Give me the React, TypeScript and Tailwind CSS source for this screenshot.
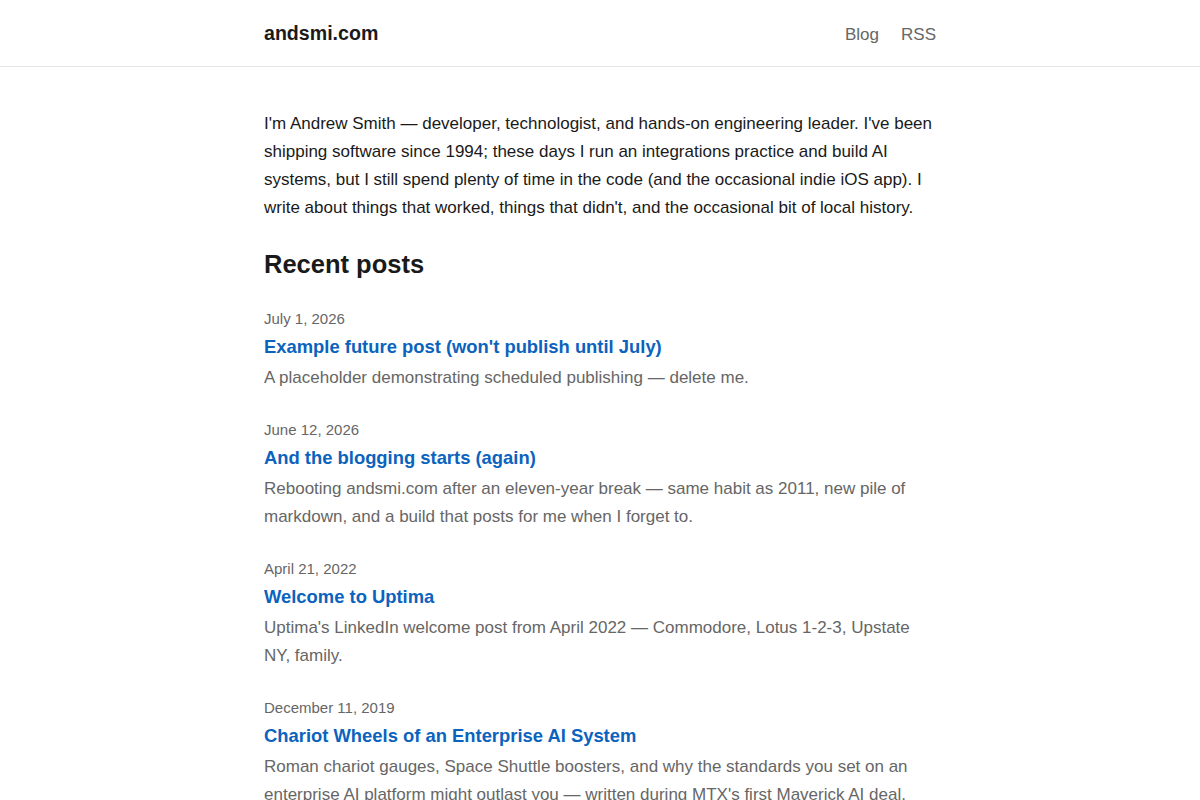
const posts = [
  {
    date: "July 1, 2026",
    title: "Example future post (won't publish until July)",
    summary: "A placeholder demonstrating scheduled publishing — delete me.",
  },
  {
    date: "June 12, 2026",
    title: "And the blogging starts (again)",
    summary:
      "Rebooting andsmi.com after an eleven-year break — same habit as 2011, new pile of markdown, and a build that posts for me when I forget to.",
  },
  {
    date: "April 21, 2022",
    title: "Welcome to Uptima",
    summary:
      "Uptima's LinkedIn welcome post from April 2022 — Commodore, Lotus 1-2-3, Upstate NY, family.",
  },
  {
    date: "December 11, 2019",
    title: "Chariot Wheels of an Enterprise AI System",
    summary:
      "Roman chariot gauges, Space Shuttle boosters, and why the standards you set on an enterprise AI platform might outlast you — written during MTX's first Maverick AI deal.",
  },
];

export default function App() {
  return (
    <div className="min-h-screen bg-white text-[#1a1a1a] font-['Liberation_Sans',Arial,sans-serif]">
      <header className="border-b border-[#e5e5e5]">
        <div className="mx-auto flex h-[66px] max-w-[672px] items-center justify-between pt-[2px]">
          <a className="text-[19.6px] font-bold text-[#1a1a1a]">andsmi.com</a>
          <nav className="flex gap-[22px] pt-[2px] text-[17px] text-[#666]">
            <a>Blog</a>
            <a>RSS</a>
          </nav>
        </div>
      </header>
      <main className="mx-auto max-w-[672px] pt-[43px] pb-10">
        <p className="text-[17px] leading-[28px]">
          I'm Andrew Smith — developer, technologist, and hands-on engineering leader. I've been
          shipping software since 1994; these days I run an integrations practice and build AI
          systems, but I still spend plenty of time in the code (and the occasional indie iOS app). I
          write about things that worked, things that didn't, and the occasional bit of local history.
        </p>
        <h2 className="mt-[27px] text-[25.5px] font-bold leading-[31px]">Recent posts</h2>
        <ul className="mt-[28px] flex flex-col gap-[27px]">
          {posts.map((p) => (
            <li key={p.title}>
              <div className="text-[15px] leading-[22px] text-[#666]">{p.date}</div>
              <a className="mt-1 block text-[18.4px] font-bold leading-[26px] text-[#0b63be]">
                {p.title}
              </a>
              <p className="mt-1 text-[17px] leading-[28px] text-[#666]">{p.summary}</p>
            </li>
          ))}
        </ul>
      </main>
    </div>
  );
}
